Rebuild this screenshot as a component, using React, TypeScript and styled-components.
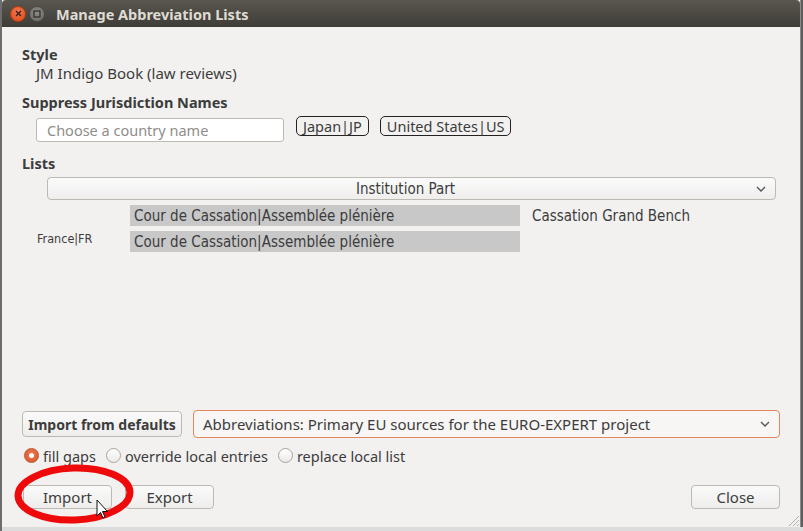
import React from "react";
import styled, { createGlobalStyle } from "styled-components";

const GlobalStyle = createGlobalStyle`
  html, body { margin: 0; padding: 0; }
  body {
    background: #d8d8d8;
    font-family: "Noto Sans", "DejaVu Sans", sans-serif;
    width: 803px; height: 531px; overflow: hidden;
  }
`;

const Screen = styled.div`
  position: relative;
  width: 803px;
  height: 531px;
  display: flex;
  align-items: flex-start;
  background: linear-gradient(to right, #6d6d6d 0, #6d6d6d 2px, #dcdcdc 2px);
  overflow: hidden;
`;

const Window = styled.div`
  position: relative;
  margin-left: 2px;
  width: 798px;
  height: 527px;
  display: flex;
  flex-direction: column;
  background: #f2f1f0;
  border-right: 1px solid #8a8a88;
  box-shadow: 2px 0 0 #5e5e5e;
`;

const TitleBar = styled.div`
  height: 27px;
  flex: none;
  display: flex;
  align-items: center;
  padding-left: 8px;
  background: linear-gradient(#5a5750, #3e3c37);
  border-radius: 4px 4px 0 0;
`;

const CircleBtn = styled.div<{ $kind: "close" | "max" }>`
  width: 16px;
  height: 16px;
  border-radius: 50%;
  margin-right: 3px;
  display: flex;
  align-items: center;
  justify-content: center;
  background: ${(p) =>
    p.$kind === "close"
      ? "radial-gradient(circle at 50% 35%, #f07a52, #dd4814)"
      : "radial-gradient(circle at 50% 35%, #8c8a84, #6c6a64)"};
  border: 1px solid ${(p) => (p.$kind === "close" ? "#b93c12" : "#4d4b46")};
  box-sizing: border-box;
`;

const Title = styled.span`
  margin-left: 8px;
  color: #dfdbd2;
  font-weight: bold;
  font-size: 14.5px;
  font-family: "Noto Sans", sans-serif;
`;

const Body = styled.div`
  flex: 1;
  display: flex;
  flex-direction: column;
  padding: 18px 20px 0 20px;
  color: #3c3c3c;
  font-size: 15px;
`;

const Heading = styled.div<{ $mt?: number }>`
  font-weight: bold;
  font-size: 14.5px;
  line-height: 18px;
  margin-top: ${(p) => p.$mt ?? 0}px;
`;

const Value = styled.div`
  line-height: 18px;
  margin-top: 1px;
  padding-left: 14px;
`;

const SuppressRow = styled.div`
  display: flex;
  align-items: center;
  margin-top: 4px;
  padding-left: 14px;
  height: 26px;
`;

const TextInput = styled.div`
  width: 248px;
  height: 24px;
  box-sizing: border-box;
  margin-top: 4px;
  border: 1px solid #bdb9b3;
  border-radius: 3px;
  background: #fff;
  color: #8f8d89;
  padding-left: 10px;
  display: flex;
  align-items: center;
  font-size: 14.5px;
`;

const Chip = styled.div<{ $ml: number }>`
  margin-left: ${(p) => p.$ml}px;
  height: 20px;
  box-sizing: border-box;
  border: 1px solid #222;
  border-radius: 5px;
  padding: 0 6px;
  display: flex;
  align-items: center;
  color: #3c3c3c;
  font-size: 14.5px;
  margin-top: -5px;
`;

const Select = styled.div<{ $accent?: boolean; $center?: boolean }>`
  position: relative;
  height: ${(p) => (p.$accent ? 28 : 23)}px;
  box-sizing: border-box;
  border: 1px solid ${(p) => (p.$accent ? "#e0875f" : "#bdb9b3")};
  border-radius: 4px;
  background: ${(p) => (p.$accent ? "#f7f6f5" : "linear-gradient(#fbfbfb, #efeeed)")};
  display: flex;
  align-items: center;
  justify-content: ${(p) => (p.$center ? "center" : "flex-start")};
  padding-left: ${(p) => (p.$center ? 0 : 9)}px;
  padding-right: ${(p) => (p.$center ? 12 : 0)}px;
  color: #3c3c3c;
`;

const CenterText = styled.span`
  font-family: "DejaVu Sans Condensed", "Liberation Sans Narrow", "Roboto", sans-serif;
  font-size: 15px;
`;

const Chevron = styled.svg`
  position: absolute;
  right: 9px;
  top: 50%;
  margin-top: -3px;
`;

const ListSelectWrap = styled.div`
  margin-top: 5px;
  margin-left: 25px;
  width: 729px;
`;

const Grid = styled.div`
  display: grid;
  grid-template-columns: 93px 390px auto;
  grid-template-rows: 21px 21px;
  row-gap: 5px;
  margin-top: 5px;
  margin-left: 15px;
  font-family: "DejaVu Sans Condensed", "Liberation Sans Narrow", "Roboto", sans-serif;
`;

const CountryLabel = styled.div`
  grid-column: 1;
  grid-row: 2;
  font-size: 12.5px;
  align-self: center;
  margin-top: -6px;
`;

const Entry = styled.div<{ $row: number }>`
  grid-column: 2;
  grid-row: ${(p) => p.$row};
  background: #c8c8c8;
  display: flex;
  align-items: center;
  padding-left: 4px;
  font-size: 15px;
`;

const Translation = styled.div`
  grid-column: 3;
  grid-row: 1;
  padding-left: 12px;
  font-size: 15px;
  align-self: center;
`;

const Spacer = styled.div`
  flex: 1;
`;

const ImportRow = styled.div`
  display: flex;
  align-items: center;
  gap: 11px;
`;

const SelectHolder = styled.div`
  flex: 1;
`;

const Button = styled.div<{ $bold?: boolean; $w: number }>`
  width: ${(p) => p.$w}px;
  height: ${(p) => (p.$bold ? 26 : 24)}px;
  box-sizing: border-box;
  border: 1px solid #bdb9b3;
  border-radius: 4px;
  background: linear-gradient(#fafafa, #eeedec);
  display: flex;
  align-items: center;
  justify-content: center;
  font-weight: ${(p) => (p.$bold ? "bold" : "normal")};
  font-size: ${(p) => (p.$bold ? 14 : 15)}px;
  color: #3c3c3c;
`;

const ButtonGap = styled.div`
  width: 13px;
`;

const RadioRow = styled.div`
  display: flex;
  align-items: center;
  margin-top: 8px;
  height: 19px;
`;

const RadioItem = styled.label<{ $ml: number }>`
  display: flex;
  align-items: center;
  margin-left: ${(p) => p.$ml}px;
  color: #3c3c3c;
  font-size: 14.5px;
`;

const RadioDot = styled.span<{ $on?: boolean }>`
  width: 15px;
  height: 15px;
  box-sizing: border-box;
  border-radius: 50%;
  margin-right: 4px;
  display: flex;
  align-items: center;
  justify-content: center;
  border: 1px solid ${(p) => (p.$on ? "#b9562c" : "#a8a49f")};
  background: ${(p) => (p.$on ? "radial-gradient(circle at 50% 40%, #ee7a4e, #d2562a)" : "linear-gradient(#ffffff, #eceae8)")};
  &::after {
    content: "";
    width: 5px;
    height: 5px;
    border-radius: 50%;
    background: ${(p) => (p.$on ? "#fff" : "transparent")};
  }
`;

const BottomRow = styled.div`
  display: flex;
  align-items: center;
  margin-top: 20px;
  margin-bottom: 18px;
  padding-left: 1px;
`;

const Overlay = styled.svg`
  position: absolute;
  left: 0;
  top: 0;
  pointer-events: none;
`;

const Grip = styled.svg`
  position: absolute;
  right: 0;
  bottom: 0;
`;

const ChevronIcon = () => (
  <Chevron width="10" height="6" viewBox="0 0 10 6">
    <path d="M1 1 L5 5 L9 1" fill="none" stroke="#555" strokeWidth="1.4" />
  </Chevron>
);

export default function App() {
  return (
    <>
      <GlobalStyle />
      <Screen>
        <Window>
          <TitleBar>
            <CircleBtn $kind="close">
              <svg width="7" height="7" viewBox="0 0 7 7">
                <path d="M1 1 L6 6 M6 1 L1 6" stroke="#3a1a0e" strokeWidth="1.3" />
              </svg>
            </CircleBtn>
            <CircleBtn $kind="max">
              <svg width="8" height="8" viewBox="0 0 8 8">
                <rect x="1" y="1" width="6" height="6" fill="none" stroke="#2f2e2b" strokeWidth="1.2" />
              </svg>
            </CircleBtn>
            <Title>Manage Abbreviation Lists</Title>
          </TitleBar>
          <Body>
            <Heading>Style</Heading>
            <Value>JM Indigo Book (law reviews)</Value>
            <Heading $mt={11}>Suppress Jurisdiction Names</Heading>
            <SuppressRow>
              <TextInput>Choose a country name</TextInput>
              <Chip $ml={12}>Japan|JP</Chip>
              <Chip $ml={11}>United States|US</Chip>
            </SuppressRow>
            <Heading $mt={13}>Lists</Heading>
            <ListSelectWrap>
              <Select $center>
                <CenterText>Institution Part</CenterText>
                <ChevronIcon />
              </Select>
            </ListSelectWrap>
            <Grid>
              <CountryLabel>France|FR</CountryLabel>
              <Entry $row={1}>Cour de Cassation|Assemblée plénière</Entry>
              <Entry $row={2}>Cour de Cassation|Assemblée plénière</Entry>
              <Translation>Cassation Grand Bench</Translation>
            </Grid>
            <Spacer />
            <ImportRow>
              <Button $bold $w={160}>Import from defaults</Button>
              <SelectHolder>
                <Select $accent>
                  Abbreviations: Primary EU sources for the EURO-EXPERT project
                  <ChevronIcon />
                </Select>
              </SelectHolder>
            </ImportRow>
            <RadioRow>
              <RadioItem $ml={2}>
                <RadioDot $on />
                fill gaps
              </RadioItem>
              <RadioItem $ml={10}>
                <RadioDot />
                override local entries
              </RadioItem>
              <RadioItem $ml={10}>
                <RadioDot />
                replace local list
              </RadioItem>
            </RadioRow>
            <BottomRow>
              <Button $w={89}>Import</Button>
              <ButtonGap />
              <Button $w={89}>Export</Button>
              <Spacer />
              <Button $w={89}>Close</Button>
            </BottomRow>
          </Body>
          <Grip width="14" height="14" viewBox="0 0 14 14">
            <path d="M13 3 L3 13 M13 7 L7 13 M13 11 L11 13" stroke="#b0aeaa" strokeWidth="1" />
          </Grip>
        </Window>
        <Overlay width="803" height="531">
          <ellipse cx="74" cy="494" rx="56" ry="26" fill="none" stroke="#ee0a0a" strokeWidth="7" transform="rotate(-2 74 494)" />
          <path
            d="M97 500 L97 516 L100.5 512.5 L103 518 L105 517 L102.5 511.5 L107.5 511.5 Z"
            fill="#fff"
            stroke="#111"
            strokeWidth="1"
            strokeLinejoin="round"
          />
        </Overlay>
      </Screen>
    </>
  );
}
